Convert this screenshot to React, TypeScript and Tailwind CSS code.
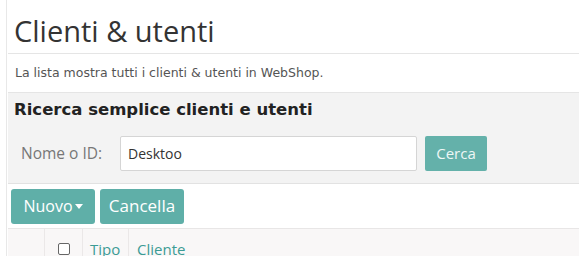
export default function App() {
  return (
    <div className="h-[256px] w-[579px] overflow-hidden bg-white font-['Open_Sans',sans-serif] text-[#333]">
      <div className="ml-[6px] h-full border-l border-[#e8e8e8] pl-[1px]">
        <h1 className="h-[54px] border-b border-[#e5e5e5] pl-[6px] pt-[12px] text-[29px] leading-[38px] font-normal text-[#333]">
          Clienti &amp; utenti
        </h1>
        <p className="h-[39px] border-b border-[#e5e5e5] pl-[7px] pt-[11px] font-['DejaVu_Sans',sans-serif] text-[12.5px] leading-[15px] text-[#555]">
          La lista mostra tutti i clienti &amp; utenti in WebShop.
        </p>
        <section className="h-[91px] border-b border-[#e2e2e2] bg-[#f3f3f3]">
          <h2 className="pl-[6px] pt-[6px] font-['DejaVu_Sans',sans-serif] text-[16.5px] leading-[22px] font-bold text-[#222]">
            Ricerca semplice clienti e utenti
          </h2>
          <div className="mt-[15px] flex items-center pl-[13px]">
            <label className="w-[99px] text-[15.5px] text-[#777]">Nome o ID:</label>
            <input
              readOnly
              value="Desktoo"
              className="h-[35px] w-[297px] rounded-[2px] border border-[#d5d5d5] bg-white px-[7px] text-[14px] text-[#333] outline-none"
            />
            <button className="ml-[8px] h-[35px] w-[62px] rounded-[2px] bg-[#64b1aa] text-[15px] text-[#eef7f6]">
              Cerca
            </button>
          </div>
        </section>
        <div className="flex h-[45px] items-center gap-[5px] border-b border-[#e8e6e6] pl-[3px]">
          <button className="flex h-[35px] w-[84px] items-center justify-center rounded-[3px] bg-[#5fafa8] text-[16px] text-white">
            Nuovo
            <svg width="8" height="5" viewBox="0 0 8 5" className="ml-[2px]">
              <path d="M0 0h8L4 5z" fill="white" />
            </svg>
          </button>
          <button className="h-[35px] w-[84px] rounded-[3px] bg-[#5fafa8] text-[17px] text-white">
            Cancella
          </button>
        </div>
        <div className="flex h-[30px] bg-[#f9f7f7] text-[15px] leading-[20px]">
          <div className="w-[37px] border-r border-[#ebe8e8]" />
          <div className="flex w-[38px] items-start justify-center border-r border-[#ebe8e8] pt-[14px]">
            <span className="inline-block h-[12px] w-[12px] rounded-[2px] border border-[#666] bg-white" />
          </div>
          <div className="w-[46px] border-r border-[#ebe8e8] pl-[7px] pt-[10px] text-[#3c9b95]">
            Tipo
          </div>
          <div className="pl-[8px] pt-[10px] text-[#3c9b95]">Cliente</div>
        </div>
      </div>
    </div>
  )
}
